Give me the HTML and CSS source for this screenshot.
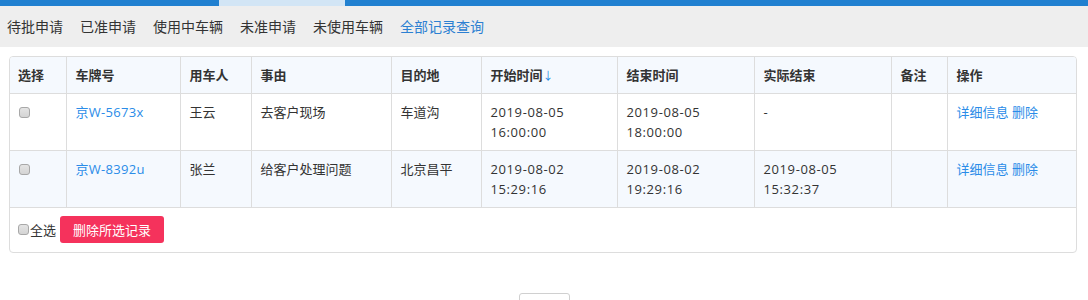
FILE: index.html
```html
<!DOCTYPE html>
<html lang="zh-CN">
<head>
    <meta charset="UTF-8">
    <title>车辆申请记录</title>
    <link rel="stylesheet" href="styles.css">
</head>
<body>

    <div class="topbar"><span class="topbar-active"></span></div>

    <div class="tabs">
        <a class="tab">待批申请</a>
        <a class="tab">已准申请</a>
        <a class="tab">使用中车辆</a>
        <a class="tab">未准申请</a>
        <a class="tab">未使用车辆</a>
        <a class="tab tab-current">全部记录查询</a>
    </div>

    <div class="panel">
        <table class="records">
            <colgroup>
                <col style="width:56px">
                <col style="width:114px">
                <col style="width:71px">
                <col style="width:140px">
                <col style="width:90px">
                <col style="width:136px">
                <col style="width:137px">
                <col style="width:137px">
                <col style="width:56px">
                <col style="width:129px">
            </colgroup>
            <thead>
                <tr>
                    <th>选择</th>
                    <th>车牌号</th>
                    <th>用车人</th>
                    <th>事由</th>
                    <th>目的地</th>
                    <th>开始时间<span class="sort">↓</span></th>
                    <th>结束时间</th>
                    <th>实际结束</th>
                    <th>备注</th>
                    <th>操作</th>
                </tr>
            </thead>
            <tbody>
                <tr>
                    <td><input type="checkbox" class="chk"></td>
                    <td><a class="link plate">京W-5673x</a></td>
                    <td>王云</td>
                    <td>去客户现场</td>
                    <td>车道沟</td>
                    <td class="time">2019-08-05<br>16:00:00</td>
                    <td class="time">2019-08-05<br>18:00:00</td>
                    <td>-</td>
                    <td></td>
                    <td><a class="link">详细信息</a> <a class="link">删除</a></td>
                </tr>
                <tr class="alt">
                    <td><input type="checkbox" class="chk"></td>
                    <td><a class="link plate">京W-8392u</a></td>
                    <td>张兰</td>
                    <td>给客户处理问题</td>
                    <td>北京昌平</td>
                    <td class="time">2019-08-02<br>15:29:16</td>
                    <td class="time">2019-08-02<br>19:29:16</td>
                    <td class="time">2019-08-05<br>15:32:37</td>
                    <td></td>
                    <td><a class="link">详细信息</a> <a class="link">删除</a></td>
                </tr>
            </tbody>
        </table>

        <div class="panel-footer">
            <label class="select-all"><input type="checkbox" class="chk">全选</label>
            <button class="btn-delete">删除所选记录</button>
        </div>
    </div>

    <div class="pager"></div>

</body>
</html>
```

FILE: styles.css
```css
body {
    margin: 0;
    font-family: "Open Sans", "Noto Sans CJK SC", sans-serif;
    font-size: 13px;
    color: #333;
    background-color: #fff;
}

.topbar {
    display: flex;
    height: 6px;
    background-color: #2080d0;
}

.topbar-active {
    width: 126px;
    margin-left: 219px;
    background-color: #d2e5f5;
}

.tabs {
    display: flex;
    align-items: center;
    gap: 17px;
    height: 41px;
    padding-left: 7px;
    background-color: #eeeeee;
}

.tab {
    color: #333;
    font-size: 14px;
    line-height: 20px;
    cursor: pointer;
}

.tab-current {
    color: #2c80d2;
}

.panel {
    margin: 9px 11px 0 9px;
    border: 1px solid #dddddd;
    border-radius: 4px;
    overflow: hidden;
}

.records {
    width: 100%;
    table-layout: fixed;
    border-collapse: collapse;
}

.records th,
.records td {
    height: 20px;
    padding: 8px 8px 8px 9px;
    line-height: 20px;
    text-align: left;
    vertical-align: top;
    border-left: 1px solid #dddddd;
    border-bottom: 1px solid #dddddd;
}

.records th:first-child,
.records td:first-child {
    border-left: none;
    padding-left: 8px;
}

.records th {
    font-weight: bold;
    background-color: #f5f9fe;
}

.records .alt td {
    background-color: #f5f9fe;
}

.records .time {
    letter-spacing: 0.6px;
}

.sort {
    color: #1e88e5;
    font-size: 11px;
    font-weight: normal;
    line-height: 1;
}

.link {
    color: #2a8ce8;
    cursor: pointer;
}

.plate {
    letter-spacing: 0.3px;
}

.chk {
    appearance: none;
    width: 11px;
    height: 11px;
    margin: 0;
    border: 1px solid #a8a8a8;
    border-radius: 3px;
    background: linear-gradient(#e4e4e4, #d4d4d4);
    vertical-align: top;
}

.records .chk {
    display: block;
    margin: 5px 0 0 1px;
}

.panel-footer {
    display: flex;
    align-items: center;
    padding: 8px 8px 9px;
}

.select-all {
    display: flex;
    align-items: center;
    gap: 1px;
    line-height: 20px;
}

.btn-delete {
    height: 27px;
    margin-left: 4px;
    padding: 0 13px;
    font-family: inherit;
    font-size: 13px;
    color: #fff;
    background-color: #f5325c;
    border: none;
    border-radius: 3px;
    cursor: pointer;
}

.pager {
    width: 49px;
    height: 30px;
    margin: 40px auto 0;
    border: 1px solid #d0d0d0;
    border-radius: 3px;
}
```
